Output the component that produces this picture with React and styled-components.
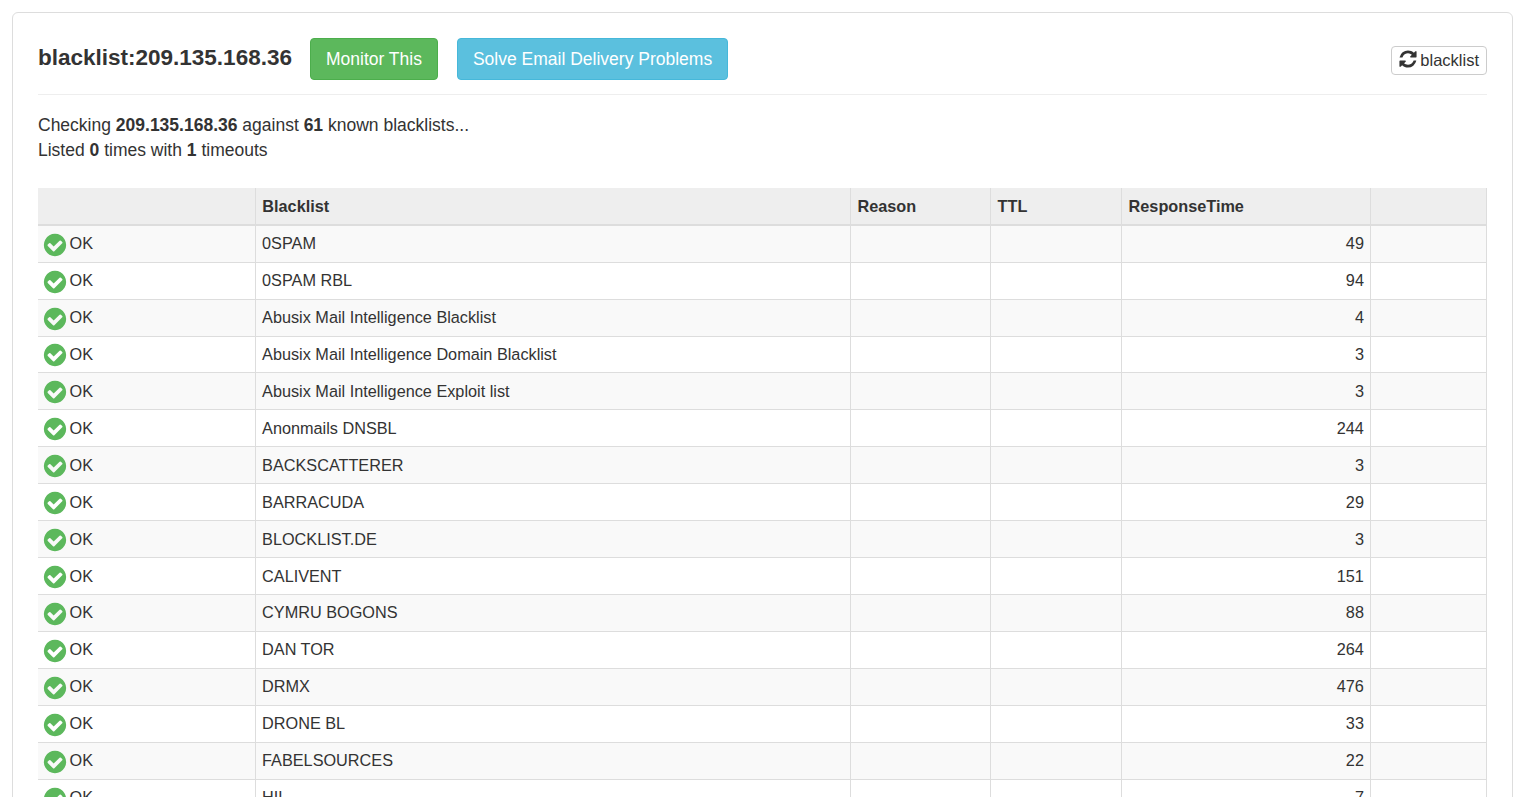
import React from "react";
import styled, { createGlobalStyle } from "styled-components";

const Global = createGlobalStyle`
  html, body { margin: 0; padding: 0; height: 797px; overflow: hidden; background: #fff; }
  body { font-family: "Liberation Sans", Arial, sans-serif; font-size: 17.5px; line-height: 25px; color: #333; }
`;

const Panel = styled.div`
  margin: 12px 7px 0 12px;
  padding: 13px 25px 0;
  border: 1px solid #ddd;
  border-radius: 6px;
  height: 900px;
`;

const Header = styled.div`
  display: flex;
  align-items: flex-start;
  height: 69px;
  padding-top: 12px;
  box-sizing: border-box;
  border-bottom: 1px solid #eee;
`;

const Title = styled.h1`
  margin: 0;
  font-size: 22.5px;
  line-height: 39px;
  font-weight: 700;
  color: #333;
`;

const ActionButton = styled.a`
  display: block;
  height: 42px;
  box-sizing: border-box;
  margin-left: ${(p) => p.$gap}px;
  padding: 8px 15px;
  border: 1px solid ${(p) => p.$border};
  border-radius: 4px;
  background: ${(p) => p.$bg};
  color: #fff;
  font-size: 17.5px;
  line-height: 24px;
`;

const RefreshButton = styled.a`
  display: flex;
  align-items: center;
  gap: 3px;
  height: 29px;
  box-sizing: border-box;
  margin: 8px 0 0 auto;
  padding: 0 7px 0 6px;
  border: 1px solid #ccc;
  border-radius: 4px;
  background: #fff;
  color: #333;
  font-size: 16.5px;
`;

const RefreshIcon = styled.svg`
  flex: none;
  width: 20px;
  height: 20px;
  margin: -3px -0.5px 0 -0.5px;
  fill: currentColor;
`;

const Summary = styled.p`
  margin: 0;
  padding-top: 18px;
  height: 93px;
  box-sizing: border-box;
`;

const Table = styled.table`
  width: 1449px;
  table-layout: fixed;
  border-collapse: collapse;
  font-size: 16.25px;
`;

const Column = styled.col`
  width: ${(p) => p.$w}px;
`;

const Head = styled.th`
  height: 37.25px;
  padding: 0 6px 0 6.75px;
  box-sizing: border-box;
  background: #eee;
  border: 1px solid #ddd;
  border-top: 0;
  border-bottom: 2px solid #ddd;
  text-align: left;
  font-weight: 700;
  &:first-child { border-left: 0; }
`;

const Row = styled.tr`
  background: ${(p) => (p.$odd ? "#f9f9f9" : "#fff")};
`;

const Cell = styled.td`
  height: 36.93px;
  padding: 0 6px 0 6.5px;
  box-sizing: border-box;
  border: 1px solid #ddd;
  text-align: ${(p) => (p.$right ? "right" : "left")};
  white-space: nowrap;
  &:first-child { border-left: 0; }
`;

const Status = styled.span`
  display: flex;
  align-items: center;
  gap: 4px;
`;

const CheckIcon = styled.svg`
  flex: none;
  width: 26px;
  height: 26px;
  margin: 2px -2.3px 0 -2.6px;
  fill: #5cb85c;
`;

const CheckCircle = () => (
  <CheckIcon viewBox="0 0 1792 1792">
    <path d="M1412 734q0-28-18-46l-91-90q-19-19-45-19t-45 19l-408 407-226-226q-19-19-45-19t-45 19l-91 90q-18 18-18 46 0 27 18 45l362 362q19 19 45 19 27 0 46-19l543-543q18-18 18-45zm252 162q0 209-103 385.5t-279.5 279.5-385.5 103-385.5-103-279.5-279.5-103-385.5 103-385.5 279.5-279.5 385.5-103 385.5 103 279.5 279.5 103 385.5z" />
  </CheckIcon>
);

const Refresh = () => (
  <RefreshIcon viewBox="0 0 1792 1792">
    <path d="M1639 1056q0 5-1 7-64 268-268 434.5t-478 166.5q-146 0-282.5-55t-243.5-157l-129 129q-19 19-45 19t-45-19-19-45v-448q0-26 19-45t45-19h448q26 0 45 19t19 45-19 45l-137 137q71 66 161 102t187 36q134 0 250-65t186-179q11-17 53-117 8-23 30-23h192q13 0 22.5 9.5t9.5 22.5zm25-800v448q0 26-19 45t-45 19h-448q-26 0-45-19t-19-45 19-45l138-138q-148-137-349-137-134 0-250 65t-186 179q-11 17-53 117-8 23-30 23h-199q-13 0-22.5-9.5t-9.5-22.5v-7q65-268 270-434.5t480-166.5q146 0 284 55.5t245 156.5l130-129q19-19 45-19t45 19 19 45z" />
  </RefreshIcon>
);

const rows = [
  ["0SPAM", 49], ["0SPAM RBL", 94], ["Abusix Mail Intelligence Blacklist", 4],
  ["Abusix Mail Intelligence Domain Blacklist", 3], ["Abusix Mail Intelligence Exploit list", 3],
  ["Anonmails DNSBL", 244], ["BACKSCATTERER", 3], ["BARRACUDA", 29], ["BLOCKLIST.DE", 3],
  ["CALIVENT", 151], ["CYMRU BOGONS", 88], ["DAN TOR", 264], ["DRMX", 476], ["DRONE BL", 33],
  ["FABELSOURCES", 22], ["HIL", 7],
];

const widths = [217, 595, 140, 131, 249, 116];

export default function App() {
  return (
    <>
      <Global />
      <Panel>
        <Header>
          <Title>blacklist:209.135.168.36</Title>
          <ActionButton $gap={18} $bg="#5cb85c" $border="#4cae4c">Monitor This</ActionButton>
          <ActionButton $gap={19} $bg="#5bc0de" $border="#46b8da">Solve Email Delivery Problems</ActionButton>
          <RefreshButton><Refresh />blacklist</RefreshButton>
        </Header>
        <Summary>
          Checking <b>209.135.168.36</b> against <b>61</b> known blacklists...<br />
          Listed <b>0</b> times with <b>1</b> timeouts
        </Summary>
        <Table>
          <colgroup>{widths.map((w, i) => <Column key={i} $w={w} />)}</colgroup>
          <thead>
            <tr>
              <Head /><Head>Blacklist</Head><Head>Reason</Head><Head>TTL</Head><Head>ResponseTime</Head><Head />
            </tr>
          </thead>
          <tbody>
            {rows.map(([name, ms], i) => (
              <Row key={name} $odd={i % 2 === 0}>
                <Cell><Status><CheckCircle />OK</Status></Cell>
                <Cell>{name}</Cell>
                <Cell />
                <Cell />
                <Cell $right>{ms}</Cell>
                <Cell />
              </Row>
            ))}
          </tbody>
        </Table>
      </Panel>
    </>
  );
}
